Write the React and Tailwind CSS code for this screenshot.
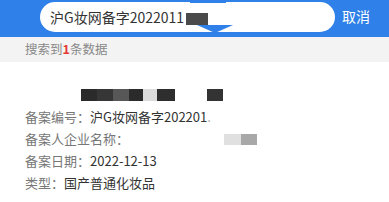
export default function App() {
  const font = { fontFamily: '"Noto Sans CJK SC", "Noto Sans", sans-serif' };
  return (
    <div className="w-[389px] h-[202px] bg-white overflow-hidden" style={font}>
      <div className="h-[37px] bg-[#2f80e8] flex items-start">
        <div className="relative ml-[40px] mt-[2px] w-[295px] h-[30px] rounded-full bg-white flex items-center pl-[10px] text-[14px] text-[#333] leading-none">
          沪G妆网备字2022011
          <span className="absolute left-[146px] top-[11px] w-[22px] h-[12px] bg-[#4a4a4a]"></span>
          <span className="absolute left-[157px] top-[23px] w-0 h-0 border-l-[18px] border-r-[18px] border-t-[8px] border-l-transparent border-r-transparent border-t-[#2f80e8]"></span>
          <span className="absolute left-[150px] -top-[2px] w-[36px] h-[3px] bg-[#2f80e8]"></span>
        </div>
        <div className="ml-[7px] mt-[9px] text-white text-[14px] leading-none">取消</div>
      </div>
      <div className="h-[25px] bg-[#f3f3f3] flex items-center pl-[25px] text-[12.5px] text-[#888] leading-none">
        搜索到<span className="text-[#e53935] font-bold">1</span>条数据
      </div>
      <div className="pl-[25px] pt-[27px]">
        <div className="flex h-[12px] ml-[56px]">
          <div className="w-[16px] bg-[#2b2b2b]"></div>
          <div className="w-[16px] bg-[#363636]"></div>
          <div className="w-[16px] bg-[#575757]"></div>
          <div className="w-[14px] bg-[#2b2b2b]"></div>
          <div className="w-[14px] bg-[#dcdcdc]"></div>
          <div className="w-[18px] bg-[#2e2e2e]"></div>
          <div className="w-[32px]"></div>
          <div className="w-[16px] bg-[#333]"></div>
        </div>
        <div className="mt-[5px] text-[13px] leading-[22px] text-[#333]">
          <div><span className="text-[#777]">备案编号：</span>沪G妆网备字202201<span className="text-[#aaa]">.</span></div>
          <div className="flex items-center">
            <span className="text-[#777]">备案人企业名称：</span>
            <span className="ml-[95px] w-[17px] h-[11px] bg-[#e0e0e0]"></span>
            <span className="w-[16px] h-[11px] bg-[#a8a8a8]"></span>
          </div>
          <div><span className="text-[#777]">备案日期：</span>2022-12-13</div>
          <div><span className="text-[#777]">类型：</span>国产普通化妆品</div>
        </div>
      </div>
    </div>
  );
}
